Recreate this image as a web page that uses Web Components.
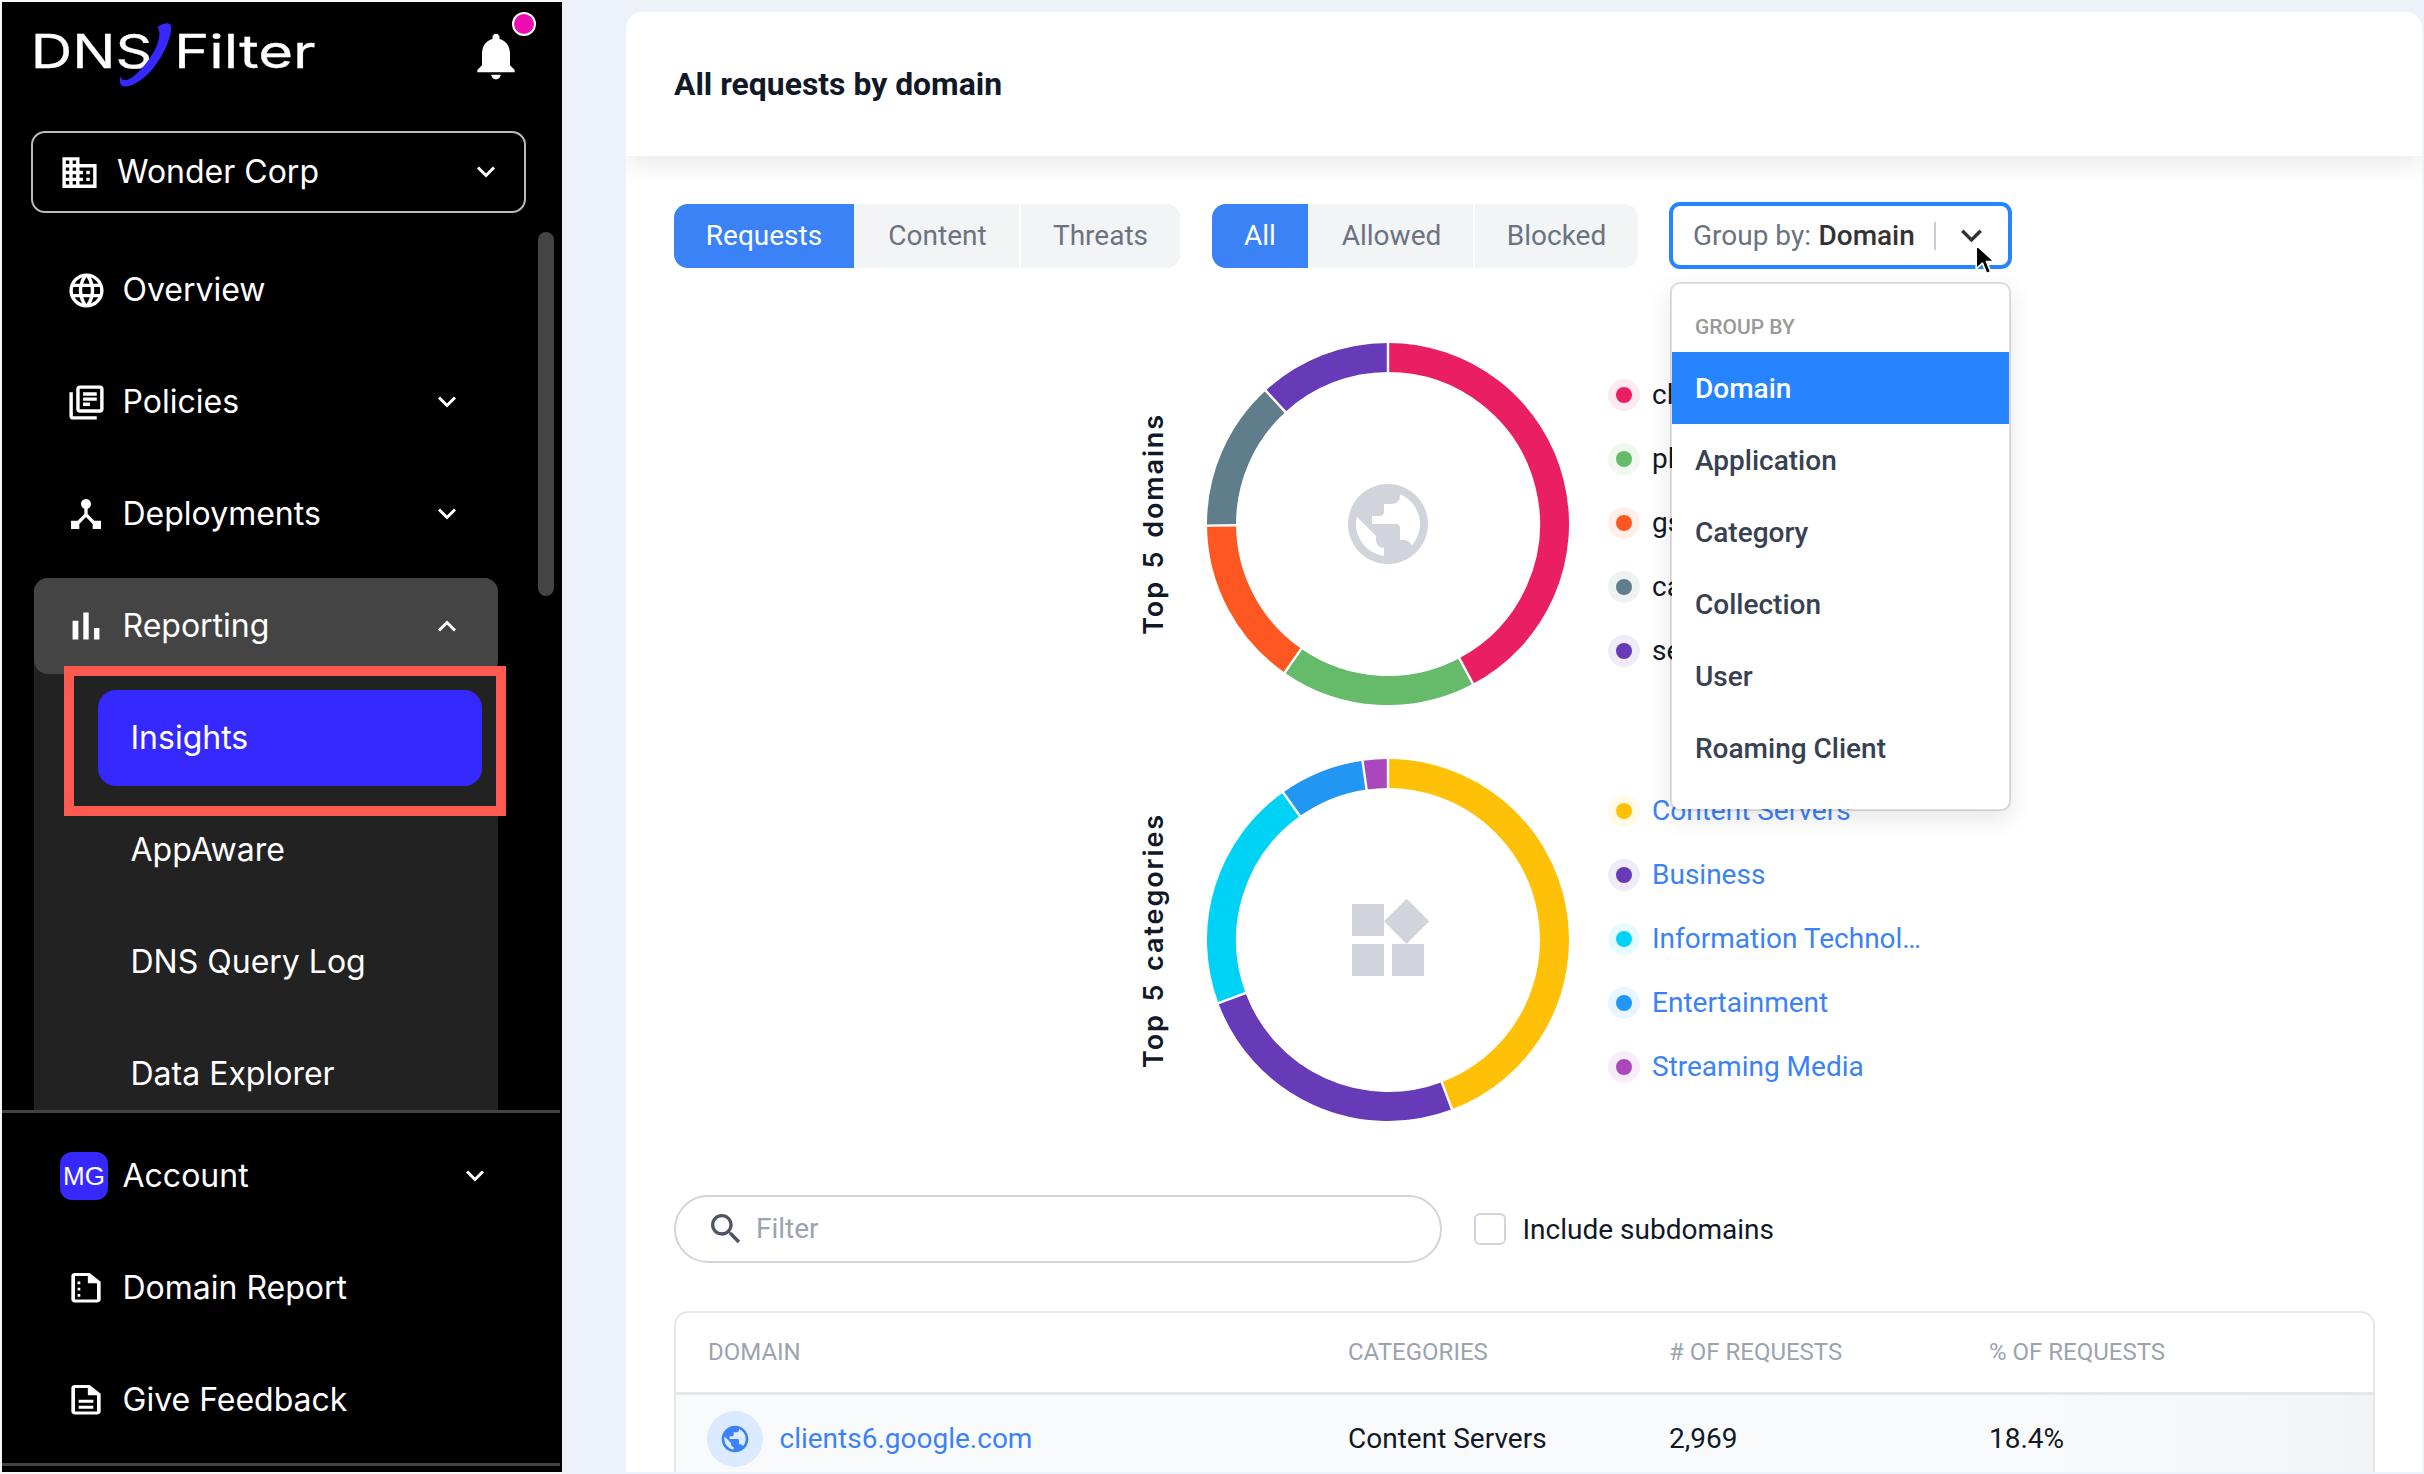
<!DOCTYPE html>
<html lang="en">
<head>
<meta charset="utf-8">
<title>DNSFilter Insights</title>
<style>
  html,body{margin:0;padding:0;height:100%}
  body{display:flex;width:2424px;height:1474px;background:#edf1f8;overflow:hidden;font-family:Roboto,"Liberation Sans",sans-serif}
</style>
</head>
<body>
<app-sidebar>
  <brand-header slot="header"></brand-header>
  <org-select slot="header">Wonder Corp</org-select>

  <nav-item><md-icon slot="icon" name="language" size="41"></md-icon>Overview</nav-item>
  <nav-item chevron="down"><md-icon slot="icon" name="policies" size="41"></md-icon>Policies</nav-item>
  <nav-item chevron="down"><md-icon slot="icon" name="hub" size="40"></md-icon>Deployments</nav-item>
  <nav-group>
    <nav-item slot="head" chevron="up" active><md-icon slot="icon" name="bars" size="46"></md-icon>Reporting</nav-item>
    <sub-item active marked>Insights</sub-item>
    <sub-item>AppAware</sub-item>
    <sub-item>DNS Query Log</sub-item>
    <sub-item>Data Explorer</sub-item>
  </nav-group>

  <nav-item slot="footer" chevron="down"><user-avatar slot="icon">MG</user-avatar>Account</nav-item>
  <nav-item slot="footer"><md-icon slot="icon" name="report" size="44" tall="35.5"></md-icon>Domain Report</nav-item>
  <nav-item slot="footer"><md-icon slot="icon" name="feedback" size="44" tall="35.5"></md-icon>Give Feedback</nav-item>
</app-sidebar>

<main-card>
  <span slot="title">All requests by domain</span>

  <toolbar-row>
    <tab-group>
      <tab-btn w="180" active>Requests</tab-btn><tab-btn w="165">Content</tab-btn><tab-btn w="161" split>Threats</tab-btn>
    </tab-group>
    <tab-group>
      <tab-btn w="96" active>All</tab-btn><tab-btn w="165">Allowed</tab-btn><tab-btn w="165" split>Blocked</tab-btn>
    </tab-group>
    <group-select value="Domain" options="Domain,Application,Category,Collection,User,Roaming Client"></group-select>
  </toolbar-row>

  <chart-row title-text="Top 5 domains" segments="152:#e91e63,214.8:#66bb6a,269.5:#ff5722,317.5:#607d8b,360:#673ab7">
    <md-icon slot="center" name="public" size="96" color="#d1d5db"></md-icon>
    <legend-item color="#e91e63">cl</legend-item>
    <legend-item color="#66bb6a">pl</legend-item>
    <legend-item color="#ff5722">gs</legend-item>
    <legend-item color="#607d8b">ca</legend-item>
    <legend-item color="#673ab7">se</legend-item>
  </chart-row>

  <chart-row class="second" title-text="Top 5 categories" segments="159.3:#ffc107,249.6:#673ab7,324.6:#00d2f6,351.9:#2196f3,360:#ab47bc">
    <md-icon slot="center" name="widgets" size="96" color="#d1d5db"></md-icon>
    <legend-item link color="#ffc107">Content Servers</legend-item>
    <legend-item link color="#673ab7">Business</legend-item>
    <legend-item link color="#00d2f6">Information Technol…</legend-item>
    <legend-item link color="#2196f3">Entertainment</legend-item>
    <legend-item link color="#ab47bc">Streaming Media</legend-item>
  </chart-row>

  <filter-row placeholder="Filter" label="Include subdomains"></filter-row>

  <data-table>
    <table-cell slot="head">Domain</table-cell>
    <table-cell slot="head">Categories</table-cell>
    <table-cell slot="head"># of requests</table-cell>
    <table-cell slot="head">% of requests</table-cell>
    <domain-cell>clients6.google.com</domain-cell>
    <table-cell body>Content Servers</table-cell>
    <table-cell body>2,969</table-cell>
    <table-cell body>18.4%</table-cell>
  </data-table>
</main-card>

<script>
const ICONS = {
  language:"M11.99 2C6.47 2 2 6.48 2 12s4.47 10 9.99 10C17.52 22 22 17.52 22 12S17.52 2 11.99 2zm6.93 6h-2.95c-.32-1.25-.78-2.45-1.38-3.56 1.84.63 3.37 1.91 4.33 3.56zM12 4.04c.83 1.2 1.48 2.53 1.91 3.96h-3.82c.43-1.43 1.08-2.76 1.91-3.96zM4.26 14C4.1 13.36 4 12.69 4 12s.1-1.36.26-2h3.38c-.08.66-.14 1.32-.14 2 0 .68.06 1.34.14 2H4.26zm.82 2h2.95c.32 1.25.78 2.45 1.38 3.56-1.84-.63-3.37-1.9-4.33-3.56zm2.95-8H5.08c.96-1.66 2.49-2.93 4.33-3.56C8.81 5.55 8.35 6.75 8.03 8zM12 19.96c-.83-1.2-1.48-2.53-1.91-3.96h3.82c-.43 1.43-1.08 2.76-1.91 3.96zM14.34 14H9.66c-.09-.66-.16-1.32-.16-2 0-.68.07-1.35.16-2h4.68c.09.65.16 1.32.16 2 0 .68-.07 1.34-.16 2zm.25 5.56c.6-1.11 1.06-2.31 1.38-3.56h2.95c-.96 1.65-2.49 2.93-4.33 3.56zM16.36 14c.08-.66.14-1.32.14-2 0-.68-.06-1.34-.14-2h3.38c.16.64.26 1.31.26 2s-.1 1.36-.26 2h-3.38z",
  policies:"M4 6H2v14c0 1.1.9 2 2 2h14v-2H4V6zm16-4H8c-1.1 0-2 .9-2 2v12c0 1.1.9 2 2 2h12c1.1 0 2-.9 2-2V4c0-1.1-.9-2-2-2zm0 14H8V4h12v12zM10 9h8v2h-8zm0 3h4v2h-4zm0-6h8v2h-8z",
  hub:"M17 16l-4-4V8.82C14.16 8.4 15 7.3 15 6c0-1.66-1.34-3-3-3S9 4.34 9 6c0 1.3.84 2.4 2 2.82V12l-4 4H3v5h5v-3.05l4-4.2 4 4.2V21h5v-5h-4z",
  bars:"M5 9.2h3V19H5zM10.6 5h2.8v14h-2.8zm5.6 8H19v6h-2.8z",
  report:"M14 2H6c-1.1 0-2 .9-2 2v16c0 1.1.89 2 1.99 2H18c1.1 0 2-.9 2-2V8l-6-6zm4 18H6V4h7v5h5v11zM7.4 7.8h1.5v1.9H7.4zm0 4.2h1.5v1.9H7.4zm0 4.2h1.5v1.9H7.4z",
  feedback:"M8 16h8v2H8zm0-4h8v2H8zm6-10H6c-1.1 0-2 .9-2 2v16c0 1.1.89 2 1.99 2H18c1.1 0 2-.9 2-2V8l-6-6zm4 18H6V4h7v5h5v11z",
  bell:"M12 22c1.1 0 2-.9 2-2h-4c0 1.1.89 2 2 2zm6-6v-5c0-3.07-1.64-5.64-4.5-6.32V4c0-.83-.67-1.5-1.5-1.5s-1.5.67-1.5 1.5v.68C7.63 5.36 6 7.92 6 11v5l-2 2v1h16v-1l-2-2z",
  building:"M12 7V3H2v18h20V7H12zM6 19H4v-2h2v2zm0-4H4v-2h2v2zm0-4H4V9h2v2zm0-4H4V5h2v2zm4 12H8v-2h2v2zm0-4H8v-2h2v2zm0-4H8V9h2v2zm0-4H8V5h2v2zm10 12h-8v-2h2v-2h-2v-2h2v-2h-2V9h8v10zm-2-8h-2v2h2v-2zm0 4h-2v2h2v-2z",
  public:"M12 2C6.48 2 2 6.48 2 12s4.48 10 10 10 10-4.48 10-10S17.52 2 12 2zm-1 17.93c-3.95-.49-7-3.85-7-7.93 0-.62.08-1.21.21-1.79L9 15v1c0 1.1.9 2 2 2v1.93zm6.9-2.54c-.26-.81-1-1.39-1.9-1.39h-1v-3c0-.55-.45-1-1-1H8v-2h2c.55 0 1-.45 1-1V7h2c1.1 0 2-.9 2-2v-.41c2.93 1.19 5 4.06 5 7.41 0 2.08-.8 3.97-2.1 5.39z",
  widgets:"M13 13v8h8v-8h-8zM3 21h8v-8H3v8zM3 3v8h8V3H3zm13.66-1.31L11 7.34 16.66 13l5.66-5.66-5.66-5.65z",
  search:"M15.5 14h-.79l-.28-.27C15.41 12.59 16 11.11 16 9.5 16 5.91 13.09 3 9.5 3S3 5.91 3 9.5 5.91 16 9.5 16c1.61 0 3.09-.59 4.23-1.57l.27.28v.79l5 4.99L20.49 19l-4.99-5zm-6 0C7.01 14 5 11.99 5 9.5S7.01 5 9.5 5 14 7.01 14 9.5 11.99 14 9.5 14z"
};
const chevron = (dir, color, w=20) => `<svg width="${w}" height="${w*0.6}" viewBox="0 0 20 12" style="display:block;flex:none" aria-hidden="true"><path d="${dir==='up'?'M2 10.5 10 2.5 18 10.5':'M2 1.5 10 9.5 18 1.5'}" fill="none" stroke="${color}" stroke-width="3"/></svg>`;

class Base extends HTMLElement {
  constructor(){ super(); this.attachShadow({mode:'open'}); }
  connectedCallback(){ this.shadowRoot.innerHTML = this.render(); }
}
const def = (name, render) => customElements.define(name, class extends Base { render(){ return render(this); } });

def('md-icon', el => {
  const s = el.getAttribute('size')||24, h = el.getAttribute('tall')||s, c = el.getAttribute('color')||'currentColor';
  return `<style>:host{display:inline-flex;flex:none;width:${s}px;height:${h}px;color:#fff}svg{display:block}</style>
  <svg width="${s}" height="${h}" viewBox="0 0 24 24" preserveAspectRatio="none" aria-hidden="true"><path fill="${c}" d="${ICONS[el.getAttribute('name')]}"/></svg>`;
});

def('app-sidebar', () => `<style>
  :host{display:flex;flex-direction:column;position:relative;box-sizing:border-box;width:562px;height:1474px;flex:none;
    background:#000;border:2px solid #f7f7f7;border-right:0;color:#fff;font-family:Inter,"Liberation Sans",sans-serif}
  .scroll{flex:1;min-height:0;overflow:hidden;margin-top:13px;padding:16px 0 0 32px;display:flex;flex-direction:column;gap:16px}
  ::slotted(nav-item),::slotted(nav-group){width:464px}
  ::slotted(nav-item[slot=footer]){width:492px}
  .bar{position:absolute;left:536px;top:230px;width:16px;height:364px;border-radius:8px;background:#444}
  .foot{flex:none;height:362px;box-sizing:border-box;border-top:3px solid #444;margin-right:2px;padding:15px 0 0 32px;position:relative}
  .foot::after{content:"";position:absolute;left:0;right:0;top:350px;height:3px;background:#444}
  .links{display:flex;flex-direction:column;gap:16px;width:492px}
</style>
<slot name="header"></slot>
<div class="scroll"><slot></slot></div>
<div class="bar"></div>
<div class="foot"><div class="links"><slot name="footer"></slot></div></div>`);

def('brand-header', () => `<style>
  :host{display:flex;height:129px;box-sizing:border-box;padding:13px 38px 0 18px;align-items:flex-start;justify-content:space-between}
  svg.logo{display:block}
  text{font-family:Inter,"Liberation Sans",sans-serif;font-weight:400;fill:#fff;stroke:#fff;stroke-width:.8}
  .bell{position:relative;width:56px;height:56px;margin-top:13px}
  .dot{position:absolute;left:44px;top:-16px;width:20px;height:20px;border-radius:50%;background:#ee0db0;border:2px solid #fff}
</style>
<svg class="logo" width="310" height="85" viewBox="0 0 930 255" role="img" aria-label="DNSFilter">
  <text x="32" y="158" font-size="139" textLength="365" lengthAdjust="spacingAndGlyphs">DNS</text>
  <text x="462" y="158" font-size="139" textLength="425" lengthAdjust="spacingAndGlyphs">Filter</text>
  <path fill="#000" d="M404 150 C424 120 444 70 436 36 L470 30 C470 90 424 180 384 210 Z"/>
  <path fill="#3629ff" d="M412 36 C428 26 446 20 452 30 C464 62 402 198 322 214 C300 219 296 200 302 184 C306 206 332 194 356 170 C402 124 432 62 412 36 Z"/>
</svg>
<div class="bell"><md-icon name="bell" size="56"></md-icon><span class="dot"></span></div>`);

def('org-select', () => `<style>
  :host{display:flex;align-items:center;box-sizing:border-box;height:82px;width:495px;margin-left:28.5px;border:2px solid #bbb;border-radius:14px;
    padding:0 28px 0 26.5px;font-size:32px;color:#fff}
  .t{flex:1;margin-left:17px;padding-bottom:2px}
</style><md-icon name="building" size="41"></md-icon><span class="t"><slot></slot></span>${chevron('down','#fff')}`);

def('nav-item', el => `<style>
  :host{display:flex;flex:none;align-items:center;box-sizing:border-box;height:96px;padding:0 41.5px 0 31.5px;border-radius:14px;font-size:32px;color:#fff;
    background:${el.hasAttribute('active')?'#444':'transparent'}}
  .i{width:41px;height:41px;flex:none;display:flex;align-items:center;justify-content:center}
  .t{flex:1;margin-left:16px;white-space:nowrap;padding-bottom:2px}
</style><span class="i"><slot name="icon"></slot></span><span class="t"><slot></slot></span>${el.getAttribute('chevron')?chevron(el.getAttribute('chevron'),'#fff'):''}`);

def('nav-group', () => `<style>
  :host{display:flex;flex-direction:column;flex:none;gap:16px;background:#222;border-radius:14px 14px 0 0}
</style><slot name="head"></slot><slot></slot>`);

def('sub-item', el => `<style>
  :host{display:flex;flex:none;align-items:center;position:relative;box-sizing:border-box;height:96px;width:384px;margin-left:64px;padding:0 0 2px 32.5px;border-radius:18px;
    font-size:32px;color:#fff;background:${el.hasAttribute('active')?'#3629ff':'transparent'}}
  .mark{position:absolute;left:-34px;top:-24px;right:-24px;bottom:-30px;border:10px solid #ff5a4f;pointer-events:none}
</style><slot></slot>${el.hasAttribute('marked')?'<span class="mark"></span>':''}`);

def('user-avatar', () => `<style>
  :host{display:flex;align-items:center;justify-content:center;flex:none;width:48px;height:48px;margin-left:-4px;border-radius:12px;background:#3629ff;
    color:#fff;font:26px "Liberation Sans",Arial,sans-serif}
</style><slot></slot>`);

def('main-card', () => `<style>
  :host{display:flex;flex-direction:column;flex:none;box-sizing:border-box;width:1796px;height:1460px;margin:12px 0 0 64px;background:#fff;border-radius:16px 16px 0 0;overflow:hidden;
    font-family:Roboto,"Liberation Sans",sans-serif}
  header{flex:none;display:flex;align-items:center;height:144px;box-sizing:border-box;padding-left:48px;background:#fff;position:relative;
    box-shadow:0 8px 24px rgba(0,0,0,.09);font-size:31.9px;font-weight:700;color:#111827}
  .body{padding:46px 48px 0 48px;display:flex;flex-direction:column}
</style><header><slot name="title"></slot></header><div class="body"><slot></slot></div>`);

def('toolbar-row', () => `<style>
  :host{display:flex;align-items:center;height:67px;gap:32px;position:relative;z-index:5}
</style><slot></slot>`);

def('tab-group', () => `<style>
  :host{display:flex;height:64px;border-radius:14px;overflow:hidden;background:#f3f4f6}
</style><slot></slot>`);

def('tab-btn', el => `<style>
  :host{display:flex;align-items:center;justify-content:center;box-sizing:border-box;width:${el.getAttribute('w')}px;font-size:28px;white-space:nowrap;
    color:${el.hasAttribute('active')?'#fff':'#6b7280'};background:${el.hasAttribute('active')?'#3b82f6':'#f3f4f6'};
    ${el.hasAttribute('split')?'border-left:2px solid #fff;':''}}
  :host(:nth-child(2)){padding-left:2px}
</style><slot></slot>`);

def('group-select', el => {
  const v = el.getAttribute('value'), opts = el.getAttribute('options').split(',');
  return `<style>
  :host{display:flex;align-items:center;position:relative;box-sizing:border-box;height:67px;width:343px;margin-left:-1px;border:4px solid #2684ff;border-radius:11px;
    padding:0 25px 0 20px;font-size:28px;color:#6b7280;background:#fff}
  b{font-weight:500;color:#333;margin-left:7.5px}
  .sep{width:2px;height:28px;background:#ccc;margin:0 24px 0 auto}
  .menu{position:absolute;left:-3px;top:76px;width:341px;box-sizing:border-box;background:#fff;background-clip:padding-box;border:2px solid rgba(0,0,0,.13);border-radius:10px;
    box-shadow:0 8px 24px rgba(0,0,0,.10);padding:29px 0 25px}
  .label{font-size:21px;font-weight:500;color:#999;padding-left:23px;line-height:28px;margin-bottom:11px}
  .opt{height:72px;display:flex;align-items:center;padding-left:23px;font-size:28px;font-weight:500;color:#374151}
  .opt.on{background:#2684ff;color:#fff}
  .cursor{position:absolute;left:302px;top:38px}
</style>
<span>Group by:</span><b>${v}</b><span class="sep"></span>${chevron('down','#333',23)}
<div class="menu"><div class="label">GROUP BY</div>${opts.map(o=>`<div class="opt${o===v?' on':''}">${o}</div>`).join('')}</div>
<svg class="cursor" width="20" height="31" viewBox="0 0 19 30" aria-hidden="true"><path d="M1 1v23l6-5.5 4 10 4-1.6-4-9.9h7.5z" fill="#000" stroke="#fff" stroke-width="1.6" stroke-linejoin="round"/></svg>`;
});

def('chart-row', el => {
  const segs = el.getAttribute('segments').split(',').map(s=>s.split(':'));
  const C=181, R=166.5, pt=(a,r)=>[C+r*Math.sin(a*Math.PI/180), C-r*Math.cos(a*Math.PI/180)];
  let prev=0, arcs='', seps='';
  segs.forEach(([a,col])=>{ a=+a;
    const [x1,y1]=pt(prev,R), [x2,y2]=pt(a,R);
    arcs+=`<path d="M${x1} ${y1}A${R} ${R} 0 ${a-prev>180?1:0} 1 ${x2} ${y2}" fill="none" stroke="${col}" stroke-width="29"/>`;
    const [a1,b1]=pt(a,150),[a2,b2]=pt(a,183);
    seps+=`<line x1="${a1}" y1="${b1}" x2="${a2}" y2="${b2}" stroke="#fff" stroke-width="2.4"/>`;
    prev=a; });
  const second = el.classList.contains('second');
  return `<style>
  :host{display:flex;align-items:center;height:362px;margin-top:${second?54:74}px;padding-left:459px}
  .title{flex:none;width:40px;writing-mode:vertical-rl;transform:rotate(180deg);font:600 27px Inter,"Liberation Sans",sans-serif;letter-spacing:1.9px;word-spacing:3px;color:#111827;white-space:nowrap;display:flex;align-items:center;justify-content:center}
  .donut{flex:none;display:grid;margin-left:34px;width:362px;height:362px}
  .donut>svg,::slotted(md-icon){grid-area:1/1;place-self:center}
  .legend{display:flex;flex-direction:column;margin-left:39px;padding-bottom:3px}
</style>
<div class="title">${el.getAttribute('title-text')}</div>
<div class="donut"><svg width="362" height="362" viewBox="0 0 362 362" aria-hidden="true">${arcs}${seps}</svg><slot name="center"></slot></div>
<div class="legend"><slot></slot></div>`;
});

def('legend-item', el => {
  const c = el.getAttribute('color');
  return `<style>
  :host{display:flex;align-items:center;height:64px;font-size:28px;white-space:nowrap;color:${el.hasAttribute('link')?'#3b82f6':'#111827'}}
  .h{width:32px;height:32px;border-radius:50%;display:flex;align-items:center;justify-content:center;margin-right:12px;background:color-mix(in srgb,${c} 10%,#fff)}
  .d{width:16px;height:16px;border-radius:50%;background:${c}}
</style><span class="h"><span class="d"></span></span><slot></slot>`;
});

def('filter-row', el => `<style>
  :host{display:flex;align-items:center;height:68px;margin-top:73.5px;font-size:28px}
  .input{display:flex;align-items:center;box-sizing:border-box;width:768px;height:68px;border:2px solid #d1d5db;border-radius:34px;padding-left:30px;color:#9ca3af}
  .input span{margin-left:10px}
  .box{width:32px;height:32px;box-sizing:border-box;margin-left:32px;border:2px solid #d1d5db;border-radius:6px}
  .lab{margin-left:16.5px;padding-top:2px;color:#111827}
</style>
<div class="input"><md-icon name="search" size="40" color="#4b5563"></md-icon><span>${el.getAttribute('placeholder')}</span></div>
<span class="box"></span><span class="lab">${el.getAttribute('label')}</span>`);

def('data-table', () => `<style>
  :host{display:block;box-sizing:border-box;width:1701px;margin-top:48px;border:2px solid #e5e7eb;border-bottom:0;border-radius:14px 14px 0 0;overflow:hidden}
  .head,.row{display:grid;grid-template-columns:640px 321px 320px 1fr;padding-left:32px;align-items:center}
  .head{height:79px;border-bottom:3px solid #e5e7eb}
  .row{height:88px;background:linear-gradient(90deg,#f9fafb 80%,#f3f4f6)}
</style><div class="head"><slot name="head"></slot></div><div class="row"><slot></slot></div>`);

def('table-cell', el => `<style>
  :host{display:block;white-space:nowrap;${el.hasAttribute('body')?'font-size:28px;color:#111827':'font-size:24px;color:#9ca3af;text-transform:uppercase'}}
</style><slot></slot>`);

def('domain-cell', () => `<style>
  :host{display:flex;align-items:center;margin-left:-1px;font-size:28px;color:#3b82f6;white-space:nowrap}
  .c{width:56px;height:56px;flex:none;border-radius:50%;background:#dbeafe;display:flex;align-items:center;justify-content:center;margin-right:16.5px}
</style><span class="c"><md-icon name="public" size="32" color="#3b82f6"></md-icon></span><slot></slot>`);
</script>
</body>
</html>
